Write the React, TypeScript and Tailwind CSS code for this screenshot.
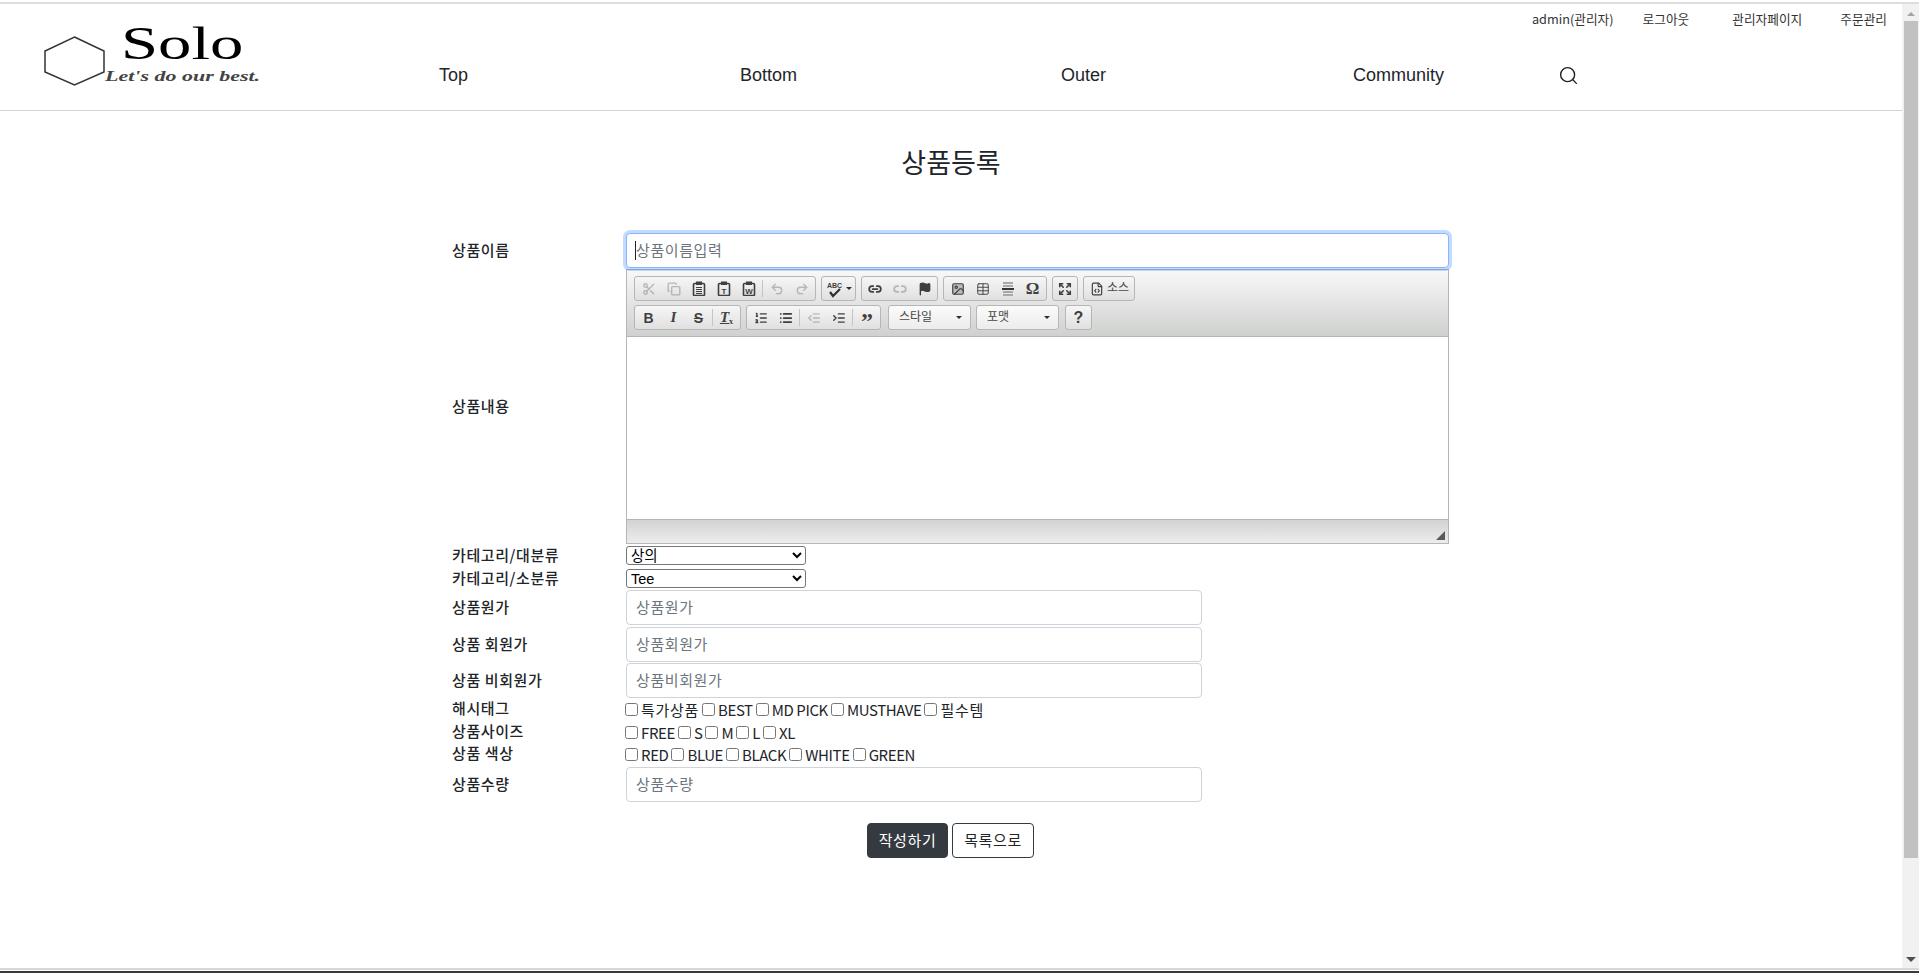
import type { ReactNode } from "react";
import {
  Scissors,
  Copy,
  Undo2,
  Redo2,
  Link2,
  Unlink2,
  Flag,
  Image,
  Table,
  Expand,
  FileCode,
  ListOrdered,
  List,
  IndentDecrease,
  IndentIncrease,
  Search,
} from "lucide-react";

const FONT = "font-['Noto_Sans_CJK_KR','Liberation_Sans',sans-serif]";

const NAV_ITEMS = ["Top", "Bottom", "Outer", "Community"];

function Tool({ children, off }: { children: ReactNode; off?: boolean }) {
  return (
    <span className={`flex h-full w-[25px] items-center justify-center text-[#3f3f3f] ${off ? "opacity-30" : ""}`}>
      {children}
    </span>
  );
}

function Sep() {
  return <span className="mx-px h-[17px] w-px bg-[#c4c4c4]" />;
}

function Group({ children, tight }: { children: ReactNode; tight?: boolean }) {
  return (
    <div className={`flex h-[25px] items-center rounded-[3px] border border-[#b6b6b6] bg-gradient-to-b from-[#f6f6f6] to-[#e0e0e0] ${tight ? "" : "px-[1px]"}`}>
      {children}
    </div>
  );
}

function Combo({ label, width }: { label: string; width: string }) {
  return (
    <div className={`flex h-[25px] items-center justify-between rounded-[3px] border border-[#b6b6b6] bg-gradient-to-b from-[#fbfbfb] to-[#ececec] pl-[10px] pr-[8px] text-[12px] leading-none text-[#484848] ${width}`}>
      <span className="-mt-1">{label}</span>
      <span className="border-x-[3px] border-t-[3px] border-x-transparent border-t-[#2f2f2f]" />
    </div>
  );
}

// clipboard icon from the paste buttons, with a letter or lines on the sheet
function PasteIcon({ letter }: { letter?: string }) {
  return (
    <svg width="14" height="15" viewBox="0 0 14 15">
      <rect x="1.5" y="2.5" width="11" height="12" rx="1" fill="none" stroke="#3f3f3f" strokeWidth="1.6" />
      <rect x="4" y="0.5" width="6" height="3.5" fill="#3f3f3f" />
      {letter ? (
        <text x="7" y="12.5" textAnchor="middle" fontSize="8" fontWeight="700" fontFamily="Liberation Sans" fill="#3f3f3f">{letter}</text>
      ) : (
        <path d="M4 6.5h6M4 8.5h6M4 10.5h6M4 12.5h6" stroke="#3f3f3f" strokeWidth="1" />
      )}
    </svg>
  );
}

function Editor() {
  const ic = { size: 14, strokeWidth: 2.4 };
  return (
    <div className="h-[275px] w-[823px] border border-[#b6b6b6] bg-white">
      <div className="flex h-[67px] flex-col gap-[4px] border-b border-[#b6b6b6] bg-gradient-to-b from-[#f8f8f8] to-[#cfd1cf] pl-[7px] pt-[6px]">
        <div className="flex gap-[5px]">
          <Group>
            <Tool off><Scissors {...ic} /></Tool>
            <Tool off><Copy {...ic} /></Tool>
            <Tool><PasteIcon /></Tool>
            <Tool><PasteIcon letter="T" /></Tool>
            <Tool><PasteIcon letter="W" /></Tool>
            <Sep />
            <Tool off><Undo2 {...ic} /></Tool>
            <Tool off><Redo2 {...ic} /></Tool>
          </Group>
          <Group>
            <span className="relative flex h-full w-[23px] items-center justify-center">
              <span className="-mt-[7px] font-['Liberation_Sans',sans-serif] text-[7px] font-bold leading-none text-[#3f3f3f]">ABC</span>
              <svg width="14" height="10" viewBox="0 0 14 10" className="absolute left-[5px] top-[11px]">
                <path d="M2 4l3 4 7-7" fill="none" stroke="#2f2f2f" strokeWidth="2.2" />
              </svg>
            </span>
            <span className="mr-[2px] border-x-[3px] border-t-[3px] border-x-transparent border-t-[#2f2f2f]" />
          </Group>
          <Group tight>
            <Tool><Link2 {...ic} strokeWidth={3} /></Tool>
            <Tool off><Unlink2 {...ic} strokeWidth={3} /></Tool>
            <Tool><Flag {...ic} fill="#3f3f3f" /></Tool>
          </Group>
          <Group>
            <Tool><Image {...ic} strokeWidth={2} fill="#bbbbbb" /></Tool>
            <Tool><Table {...ic} strokeWidth={1.6} /></Tool>
            <Tool>
              <svg width="14" height="14" viewBox="0 0 14 14">
                <path d="M2 0h10v2H2zM2 3h10v2H2z" fill="#a8a8a8" />
                <path d="M1 6h12v2H1z" fill="#333" />
                <path d="M2 9h10v2H2zM2 12h10v2H2z" fill="#a8a8a8" />
              </svg>
            </Tool>
            <Tool><span className="font-['Liberation_Serif',serif] text-[17px] font-bold leading-none">Ω</span></Tool>
          </Group>
          <Group tight>
            <span className="flex h-full w-[24px] items-center justify-center text-[#3f3f3f]"><Expand size={14} strokeWidth={2.8} /></span>
          </Group>
          <Group tight>
            <Tool><FileCode {...ic} strokeWidth={2} /></Tool>
            <span className="-ml-[2px] mr-[5px] -mt-1 text-[12px] leading-none text-[#484848]">소스</span>
          </Group>
        </div>
        <div className="flex">
          <Group>
            <Tool><span className="font-['Liberation_Sans',sans-serif] text-[14px] font-bold leading-none">B</span></Tool>
            <Tool><span className="font-['Liberation_Serif',serif] text-[15px] font-bold italic leading-none">I</span></Tool>
            <Tool><span className="font-['Liberation_Sans',sans-serif] text-[14px] font-bold leading-none line-through">S</span></Tool>
            <Sep />
            <Tool><span className="font-['Liberation_Serif',serif] text-[15px] font-bold italic leading-none underline">T<sub className="text-[8px] not-italic">x</sub></span></Tool>
          </Group>
          <div className="ml-[5px]">
            <Group>
              <Tool><ListOrdered {...ic} /></Tool>
              <Tool><List {...ic} strokeWidth={3} /></Tool>
              <Sep />
              <Tool off><IndentDecrease {...ic} /></Tool>
              <Tool><IndentIncrease {...ic} /></Tool>
              <Sep />
              <Tool><span className="mt-[7px] font-['Liberation_Serif',serif] text-[24px] font-bold leading-none tracking-[-1px]">”</span></Tool>
            </Group>
          </div>
          <div className="ml-[7px] flex gap-[5px]">
            <Combo label="스타일" width="w-[83px]" />
            <Combo label="포맷" width="w-[83px]" />
          </div>
          <div className="ml-[6px]">
            <Group tight>
              <Tool><span className="font-['Liberation_Sans',sans-serif] text-[16px] font-bold leading-none">?</span></Tool>
            </Group>
          </div>
        </div>
      </div>
      <div className="h-[182px]" />
      <div className="flex h-[24px] items-end justify-end border-t border-[#b6b6b6] bg-gradient-to-b from-[#d2d3d2] to-[#ededed] p-[3px]">
        <span className="h-0 w-0 border-b-[9px] border-l-[9px] border-b-[#5a5a5a] border-l-transparent" />
      </div>
    </div>
  );
}

function Row({ label, className, children }: { label: string; className?: string; children: ReactNode }) {
  return (
    <div className={`flex items-center ${className ?? ""}`}>
      <label className="-mt-[1px] w-[174px] shrink-0 text-[15px] font-medium tracking-[0.6px] text-[#212529]">{label}</label>
      {children}
    </div>
  );
}

function TextField({ placeholder }: { placeholder: string }) {
  return (
    <input
      placeholder={placeholder}
      className="h-[35px] w-[576px] rounded-[4px] border border-[#ced4da] bg-white px-[9px] pb-[2px] text-[15px] tracking-[0.6px] text-[#212529] placeholder:text-[#6c757d]"
    />
  );
}

function Checks({ items }: { items: string[] }) {
  return (
    <div className="-ml-[1px] flex items-center gap-[3px] leading-none text-[#212529]">
      {items.map((item) => (
        <label key={item} className="flex items-center gap-[3px]">
          <input type="checkbox" className="m-0 h-[13px] w-[13px]" />
          <span className={/^[A-Z ]+$/.test(item) ? "text-[15px] tracking-[-0.4px]" : "text-[15px] tracking-[0.7px]"}>{item}</span>
        </label>
      ))}
    </div>
  );
}

function Select({ value }: { value: string }) {
  return (
    <select className="h-[19px] w-[180px] rounded-[3px] border border-[#767676] bg-white py-0 font-['Liberation_Sans','Noto_Sans_CJK_KR',sans-serif] text-[14.5px] leading-none text-black">
      <option>{value}</option>
    </select>
  );
}

export default function App() {
  return (
    <div className={`flex h-[973px] flex-col overflow-hidden bg-white ${FONT}`}>
      <div className="mt-[2px] h-[2px] shrink-0 bg-[#dedede]" />
      <div className="flex min-h-0 flex-1">
        <div className="min-w-0 flex-1">
          {/* Header */}
          <header className="flex h-[107px] border-b border-[#d5d5d5]">
            <div className="flex w-[296px] shrink-0 pl-[44px] pt-[32px]">
              <svg width="61" height="50" viewBox="0 0 61 50" className="shrink-0">
                <path d="M30.5 1 60 15v21L30.5 49 1 36V15z" fill="none" stroke="#333" strokeWidth="1.5" />
              </svg>
              <div className="-mt-[15px] flex flex-col">
                <span className="ml-[16px] origin-left scale-x-[1.42] font-['Liberation_Serif',serif] text-[47px] leading-[44px] text-black">Solo</span>
                <span className="mt-[4px] origin-left scale-x-[1.57] whitespace-nowrap font-['Liberation_Serif',serif] text-[14px] font-bold italic leading-[16px] text-[#444]">Let's do our best.</span>
              </div>
            </div>
            <div className="min-w-0 flex-1">
              <div className="flex h-[30px] items-center justify-end text-[12.7px] text-[#333]">
                <span>admin(관리자)</span>
                <span className="ml-[29px]">로그아웃</span>
                <span className="ml-[43px]">관리자페이지</span>
                <span className="ml-[38px] mr-[15px]">주문관리</span>
              </div>
              <nav className="flex h-[73px] items-center pt-[9px] font-['Liberation_Sans',sans-serif] text-[18px] text-[#212529]">
                {NAV_ITEMS.map((item) => (
                  <span key={item} className="w-[315px] text-center">{item}</span>
                ))}
                <Search size={21} strokeWidth={1.6} className="ml-[2px] text-[#222]" />
              </nav>
            </div>
          </header>

          <h2 className="mt-[31px] text-center text-[27px] font-normal leading-[40px] text-[#212529]">상품등록</h2>

          {/* Form */}
          <form className="ml-[452px] mt-[51px]">
            <Row label="상품이름">
              <div className="relative">
                <input
                  placeholder="상품이름입력"
                  className="h-[35px] w-[823px] rounded-[4px] border border-[#86b7fe] bg-white px-[9px] pb-[2px] text-[15px] tracking-[0.6px] shadow-[0_0_0_3px_rgba(13,110,253,0.25)] outline-none placeholder:text-[#6c757d]"
                />
                <span className="absolute left-[9px] top-[8px] h-[19px] w-px bg-[#222]" />
              </div>
            </Row>
            <Row label="상품내용" className="mt-[1px]">
              <Editor />
            </Row>
            <Row label="카테고리/대분류" className="mt-[2px] h-[19px]">
              <Select value="상의" />
            </Row>
            <Row label="카테고리/소분류" className="mt-[4px] h-[19px]">
              <Select value="Tee" />
            </Row>
            <Row label="상품원가" className="mt-[2px]">
              <TextField placeholder="상품원가" />
            </Row>
            <Row label="상품 회원가" className="mt-[2px]">
              <TextField placeholder="상품회원가" />
            </Row>
            <Row label="상품 비회원가" className="mt-[1px]">
              <TextField placeholder="상품비회원가" />
            </Row>
            <Row label="해시태그" className="h-[22px]">
              <Checks items={["특가상품", "BEST", "MD PICK", "MUSTHAVE", "필수템"]} />
            </Row>
            <Row label="상품사이즈" className="mt-[1px] h-[22px]">
              <Checks items={["FREE", "S", "M", "L", "XL"]} />
            </Row>
            <Row label="상품 색상" className="h-[22px]">
              <Checks items={["RED", "BLUE", "BLACK", "WHITE", "GREEN"]} />
            </Row>
            <Row label="상품수량" className="mt-[2px]">
              <TextField placeholder="상품수량" />
            </Row>
            <div className="ml-[415px] mt-[21px] flex gap-[4px] text-[15px] tracking-[0.6px]">
              <button type="button" className="h-[35px] w-[81px] rounded-[4px] border border-[#343a40] bg-[#343a40] text-white">작성하기</button>
              <button type="button" className="h-[35px] w-[82px] rounded-[4px] border border-[#343a40] bg-white text-[#212529]">목록으로</button>
            </div>
          </form>
        </div>

        {/* Scrollbar */}
        <div className="flex w-[17px] shrink-0 flex-col items-center bg-[#f1f1f1]">
          <span className="mt-[8px] border-x-[4px] border-b-[4px] border-x-transparent border-b-[#a3a3a3]" />
          <div className="mt-[5px] h-[837px] w-[14px] bg-[#c1c1c1]" />
          <span className="mt-auto mb-[6px] border-x-[5px] border-t-[5px] border-x-transparent border-t-[#505050]" />
        </div>
      </div>
      <div className="h-[5px] shrink-0 border-t-2 border-b-2 border-t-[#d8d8d8] border-b-[#3a3a3a] bg-white" />
    </div>
  );
}
